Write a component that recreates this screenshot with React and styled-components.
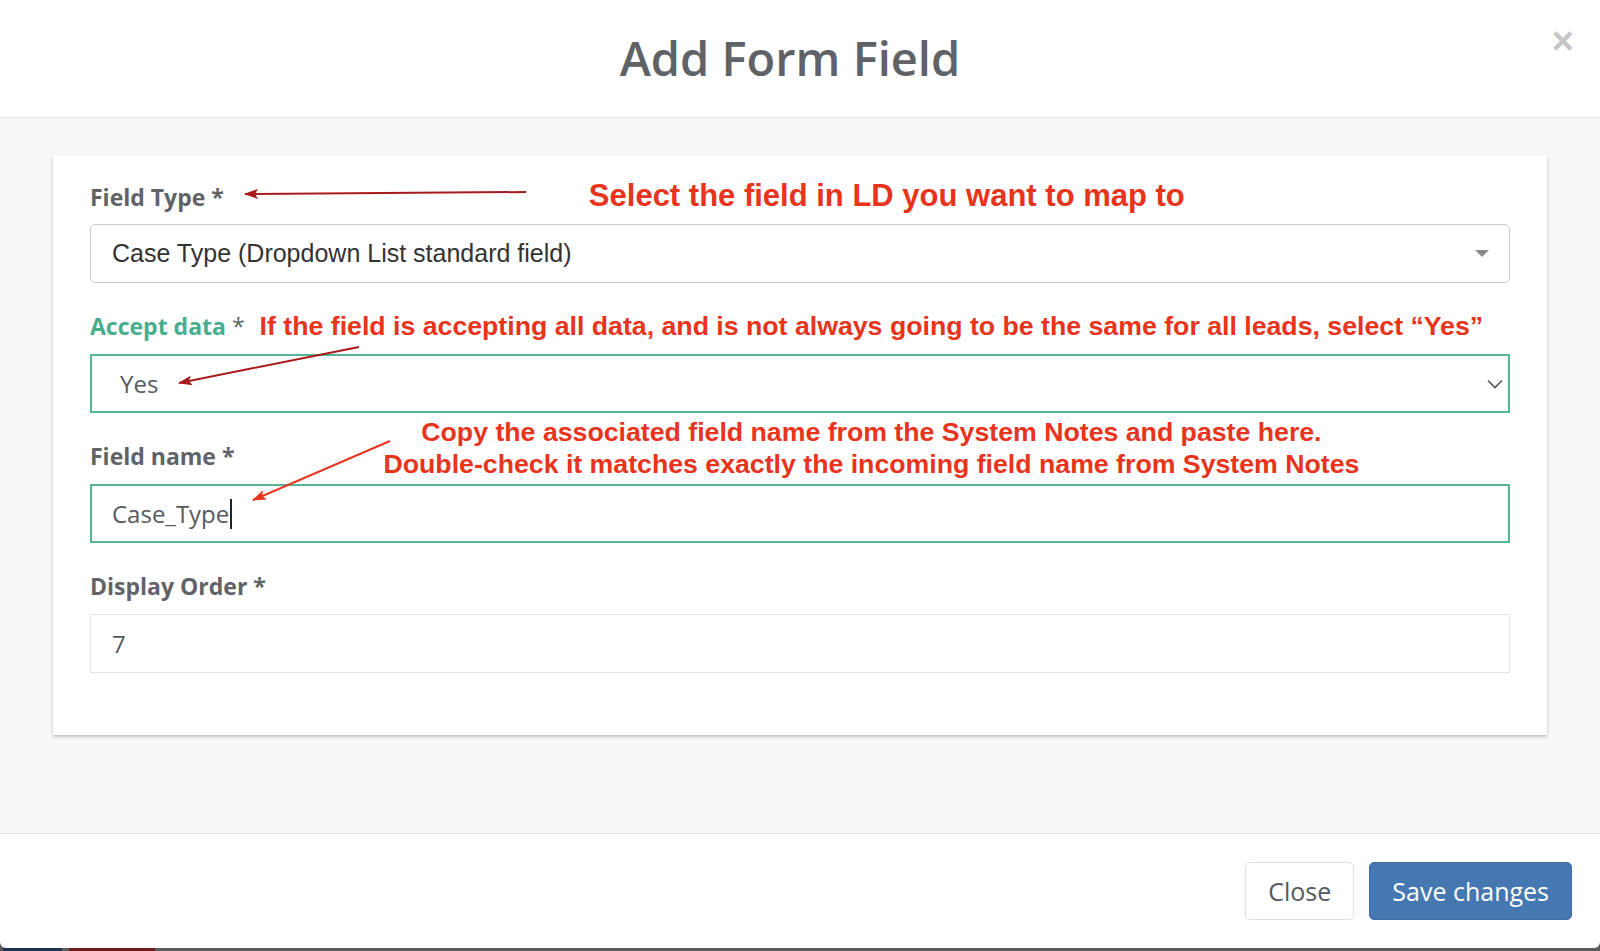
import React from "react";
import styled, { createGlobalStyle } from "styled-components";

const GlobalStyle = createGlobalStyle`
  html, body {
    margin: 0;
    padding: 0;
    background: #5a5a5a;
  }
  body {
    font-family: "Open Sans", sans-serif;
  }
`;

const Page = styled.div`
  width: 1600px;
  height: 951px;
  display: flex;
  flex-direction: column;
  overflow: hidden;
`;

const Modal = styled.div`
  height: 948px;
  flex: none;
  background: #fff;
  border-radius: 0 0 6px 6px;
  display: flex;
  flex-direction: column;
  overflow: hidden;
`;

const Header = styled.div`
  height: 117px;
  flex: none;
  border-bottom: 1px solid #e2e3e5;
  display: grid;
  grid-template-columns: 1fr auto 1fr;
  align-items: center;
`;

const Title = styled.h2`
  grid-column: 2;
  margin: 0 20px 0 0;
  font-family: "Open Sans", sans-serif;
  font-weight: 600;
  font-size: 47px;
  line-height: 1;
  color: #5f6266;
`;

const CloseX = styled.button`
  grid-column: 3;
  justify-self: end;
  align-self: start;
  margin: 22px 26px 0 0;
  padding: 0;
  border: 0;
  background: none;
  font-family: "Liberation Sans", Arial, sans-serif;
  font-weight: 700;
  font-size: 38px;
  line-height: 1;
  color: #c6c6c6;
`;

const Body = styled.div`
  flex: 1;
  background: #f7f8fa;
  border-bottom: 1px solid #e2e3e5;
  padding: 37px 53px;
`;

const Card = styled.div`
  position: relative;
  background: #fff;
  box-shadow: 0 2px 3px rgba(0, 0, 0, 0.22), 0 0 1px rgba(0, 0, 0, 0.1);
  padding: 26px 37px 62px;
`;

const Group = styled.div`
  & + & {
    margin-top: 28px;
  }
`;

const LabelRow = styled.div`
  display: flex;
  align-items: baseline;
  height: 30px;
  margin-bottom: 13px;
`;

const Label = styled.label`
  flex: none;
  font-family: "Open Sans", sans-serif;
  font-weight: 700;
  font-size: 23px;
  line-height: 30px;
  color: ${(p) => (p.$accent ? "#47ae8c" : "#5f6368")};
`;

const Star = styled.span`
  color: #5f6368;
  font-weight: ${(p) => (p.$light ? 400 : 700)};
`;

const Note = styled.span`
  flex: none;
  font-family: "Liberation Sans", Arial, sans-serif;
  font-weight: 700;
  font-size: ${(p) => p.$size}px;
  line-height: 30px;
  color: #e8341c;
  margin-left: ${(p) => p.$offset}px;
  white-space: nowrap;
`;

const NoteBlock = styled.div`
  flex: none;
  align-self: flex-end;
  margin: 0 0 -9px ${(p) => p.$offset}px;
  font-family: "Liberation Sans", Arial, sans-serif;
  font-weight: 700;
  font-size: 26.7px;
  line-height: 32px;
  color: #e8341c;
  text-align: center;
  white-space: nowrap;
`;

const Control = styled.div`
  height: 59px;
  box-sizing: border-box;
  display: flex;
  align-items: center;
  justify-content: space-between;
  padding: 0 ${(p) => (p.$padRight != null ? p.$padRight : 20)}px 0 ${(p) => p.$pad || 21}px;
  background: #fff;
  border: ${(p) =>
    p.$focus ? "2px solid #55b696" : `1px solid ${p.$round ? "#cbcbcb" : "#e2e2e2"}`};
  border-radius: ${(p) => (p.$round ? "5px" : "0")};
`;

const Value = styled.span`
  display: flex;
  align-items: center;
  font-family: ${(p) =>
    p.$arial ? '"Liberation Sans", Arial, sans-serif' : '"Open Sans", sans-serif'};
  font-size: ${(p) => (p.$arial ? 25 : 24)}px;
  color: ${(p) => (p.$arial ? "#333" : "#555a5f")};
`;

const TextCaret = styled.span`
  display: inline-block;
  width: 1.5px;
  height: 30px;
  margin-left: 1px;
  background: #222;
`;

const Arrows = styled.svg`
  position: absolute;
  inset: 0;
  width: 100%;
  height: 100%;
  pointer-events: none;
  overflow: visible;
`;

const Footer = styled.div`
  height: 114px;
  flex: none;
  display: flex;
  align-items: center;
  justify-content: flex-end;
  gap: 15px;
  padding-right: 28px;
`;

const Button = styled.button`
  height: 58px;
  padding: 0 22px;
  font-family: "Open Sans", sans-serif;
  font-size: 25px;
  border-radius: 5px;
  border: 1px solid ${(p) => (p.$primary ? "#3e6da4" : "#dedfe0")};
  background: ${(p) => (p.$primary ? "#4577b0" : "#fff")};
  color: ${(p) => (p.$primary ? "#fff" : "#555a5f")};
`;

const Backdrop = styled.div`
  flex: 1;
  display: flex;
  background: #5c5c5c;
`;

const Strip = styled.div`
  width: ${(p) => p.$w}px;
  margin-left: ${(p) => p.$ml}px;
  background: ${(p) => p.$c};
`;

const Chevron = () => (
  <svg width="16" height="10" viewBox="0 0 16 10">
    <path d="M1 1.5 L8 8.5 L15 1.5" fill="none" stroke="#555" strokeWidth="1.6" />
  </svg>
);

const Caret = () => (
  <svg width="14" height="7" viewBox="0 0 14 7">
    <path d="M0 0 H14 L7 7 Z" fill="#8a8a8a" />
  </svg>
);

const App = () => {
  return (
    <Page>
      <GlobalStyle />
      <Modal>
        <Header>
          <Title>Add Form Field</Title>
          <CloseX>×</CloseX>
        </Header>
        <Body>
          <Card>
            <Group>
              <LabelRow>
                <Label>
                  Field Type <Star>*</Star>
                </Label>
                <Note $size={31} $offset={365}>
                  Select the field in LD you want to map to
                </Note>
              </LabelRow>
              <Control $round>
                <Value $arial>Case Type (Dropdown List standard field)</Value>
                <Caret />
              </Control>
            </Group>
            <Group>
              <LabelRow>
                <Label $accent>
                  Accept data <Star $light>*</Star>
                </Label>
                <Note $size={26.7} $offset={15}>
                  If the field is accepting all data, and is not always going to be the same for all leads, select “Yes”
                </Note>
              </LabelRow>
              <Control $focus $pad={28} $padRight={5}>
                <Value>Yes</Value>
                <Chevron />
              </Control>
            </Group>
            <Group>
              <LabelRow>
                <Label>
                  Field name <Star>*</Star>
                </Label>
                <NoteBlock $offset={149}>
                  Copy the associated field name from the System Notes and paste here.
                  <br />
                  Double-check it matches exactly the incoming field name from System Notes
                </NoteBlock>
              </LabelRow>
              <Control $focus $pad={20}>
                <Value>
                  Case_Type
                  <TextCaret />
                </Value>
              </Control>
            </Group>
            <Group>
              <LabelRow>
                <Label>
                  Display Order <Star>*</Star>
                </Label>
              </LabelRow>
              <Control>
                <Value>7</Value>
              </Control>
            </Group>

            <Arrows>
              <defs>
                <marker id="hd" viewBox="0 0 14 10" refX="13" refY="5" markerWidth="14" markerHeight="10" markerUnits="userSpaceOnUse" orient="auto">
                  <path d="M0 0 L14 5 L0 10 L3 5 Z" fill="#a81a1c" />
                </marker>
                <marker id="hr" viewBox="0 0 14 10" refX="13" refY="5" markerWidth="14" markerHeight="10" markerUnits="userSpaceOnUse" orient="auto">
                  <path d="M0 0 L14 5 L0 10 L3 5 Z" fill="#e8341c" />
                </marker>
              </defs>
              <line x1="473" y1="37" x2="192" y2="39" stroke="#a81a1c" strokeWidth="2" markerEnd="url(#hd)" />
              <line x1="306" y1="192" x2="126" y2="228" stroke="#a81a1c" strokeWidth="2" markerEnd="url(#hd)" />
              <line x1="337" y1="286" x2="200" y2="345" stroke="#e8341c" strokeWidth="2" markerEnd="url(#hr)" />
            </Arrows>
          </Card>
        </Body>
        <Footer>
          <Button>Close</Button>
          <Button $primary>Save changes</Button>
        </Footer>
      </Modal>
      <Backdrop>
        <Strip $w={59} $ml={3} $c="#1e3350" />
        <Strip $w={86} $ml={7} $c="#6a1b1b" />
      </Backdrop>
    </Page>
  );
};

export default App;
